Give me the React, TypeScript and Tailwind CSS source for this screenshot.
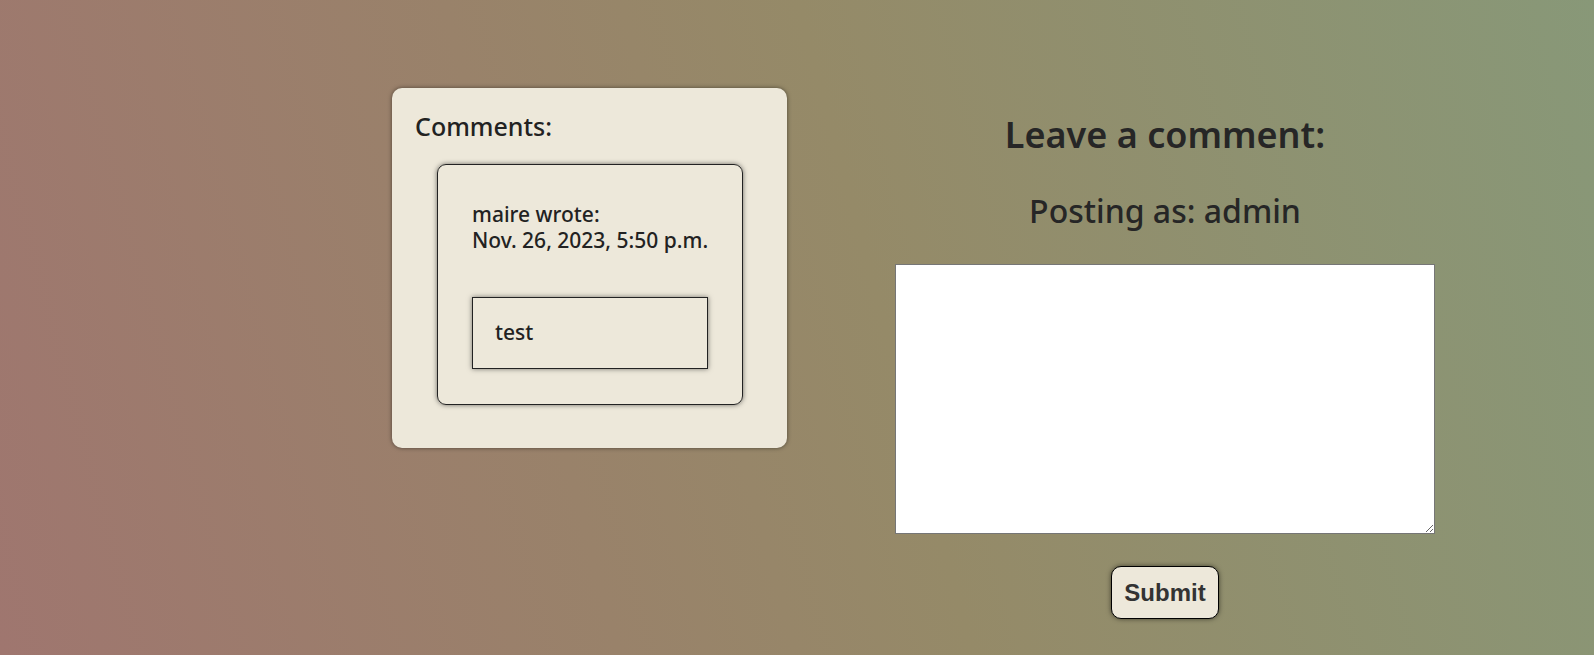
import React from "react";

export default function App() {
  return (
    <div className="min-h-screen w-full bg-[linear-gradient(75deg,#9f766f_0%,#99826a_35%,#958a68_55%,#889878_100%)] font-['Noto_Sans',sans-serif] text-[#222]">
      <div className="flex items-start pl-[392px] pt-[88px]">
        {/* comments list */}
        <section className="h-[360px] w-[395px] rounded-[10px] bg-[#ede8da] pl-[23px] pt-[21px] shadow-[0_0_4px_rgba(0,0,0,0.5)]">
          <h3 className="text-[25px] font-medium leading-[34px]">Comments:</h3>
          <div className="ml-[22px] mt-[21px] w-fit rounded-[9px] border border-[#222] px-[34px] pb-[35px] pt-[36px] shadow-[0_0_5px_rgba(0,0,0,0.55)]">
            <p className="text-[21px] font-medium leading-[26px]">
              maire wrote:
              <br />
              Nov. 26, 2023, 5:50 p.m.
            </p>
            <div className="mt-[44px] border border-[#222] px-[22px] pb-[23px] pt-[21px] shadow-[0_0_5px_rgba(0,0,0,0.5)]">
              <p className="text-[21px] font-medium leading-[26px]">test</p>
            </div>
          </div>
        </section>

        {/* comment form */}
        <div className="ml-[108px] flex w-[540px] flex-col items-center pt-[27px] text-[#262626]">
          <h1 className="text-[36px] font-semibold leading-[40px]">Leave a comment:</h1>
          <h2 className="mt-[36px] text-[32px] font-medium leading-[40px]">Posting as: admin</h2>
          <textarea className="mt-[33px] h-[270px] w-[540px] border border-[#767676] bg-white" />
          <button className="mt-[32px] h-[53px] rounded-[10px] border border-black bg-[#ede8da] px-[12px] font-['Liberation_Sans',Arial,sans-serif] text-[24px] font-bold text-[#333] shadow-[0_0_5px_rgba(0,0,0,0.55)]">
            Submit
          </button>
        </div>
      </div>
    </div>
  );
}
